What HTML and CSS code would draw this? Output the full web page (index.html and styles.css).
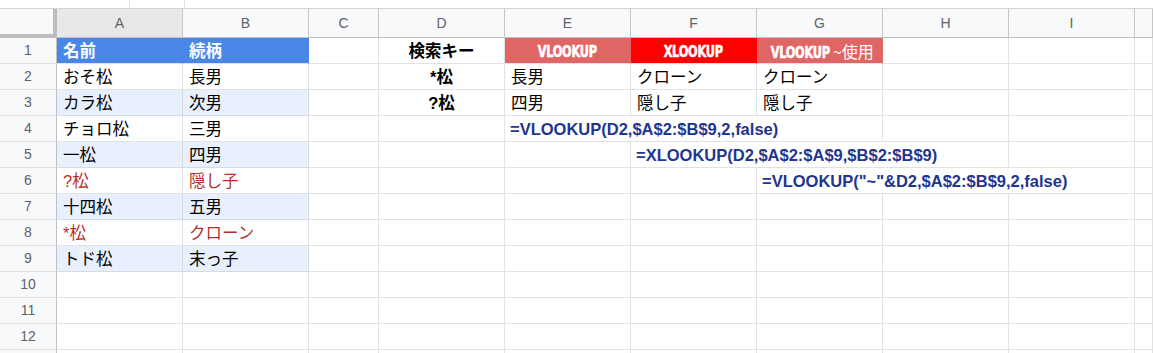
FILE: index.html
```html
<!DOCTYPE html>
<html lang="ja">
<head>
<meta charset="utf-8">
<title>Sheet</title>
<link rel="stylesheet" href="styles.css">
</head>
<body>
<div class="top">
  <span class="tb-gap"></span><span class="tb-line"></span><span class="tb-mid"></span><span class="tb-line"></span>
</div>
<div class="sheet">
  <div class="corner"></div>
  <div class="ch sel">A</div><div class="ch">B</div><div class="ch">C</div><div class="ch">D</div><div class="ch">E</div><div class="ch">F</div><div class="ch">G</div><div class="ch">H</div><div class="ch">I</div><div class="ch"></div>

  <div class="rh">1</div>
  <div class="c hd-blue">名前</div><div class="c hd-blue">続柄</div><div class="c"></div>
  <div class="c key">検索キー</div>
  <div class="c hd-lt"><span class="imp">VLOOKUP</span></div>
  <div class="c hd-red"><span class="imp">XLOOKUP</span></div>
  <div class="c hd-lt"><span class="imp">VLOOKUP</span><span class="jp-h">~使用</span></div>
  <div class="c"></div><div class="c"></div><div class="c"></div>

  <div class="rh">2</div>
  <div class="c">おそ松</div><div class="c">長男</div><div class="c"></div>
  <div class="c key">*松</div>
  <div class="c">長男</div><div class="c">クローン</div><div class="c">クローン</div>
  <div class="c"></div><div class="c"></div><div class="c"></div>

  <div class="rh">3</div>
  <div class="c band">カラ松</div><div class="c band">次男</div><div class="c"></div>
  <div class="c key">?松</div>
  <div class="c">四男</div><div class="c">隠し子</div><div class="c">隠し子</div>
  <div class="c"></div><div class="c"></div><div class="c"></div>

  <div class="rh">4</div>
  <div class="c">チョロ松</div><div class="c">三男</div><div class="c"></div><div class="c"></div>
  <div class="c fx span3">=VLOOKUP(D2,$A$2:$B$9,2,false)</div>
  <div class="c"></div><div class="c"></div><div class="c"></div>

  <div class="rh">5</div>
  <div class="c band">一松</div><div class="c band">四男</div><div class="c"></div><div class="c"></div><div class="c"></div>
  <div class="c fx span3">=XLOOKUP(D2,$A$2:$A$9,$B$2:$B$9)</div>
  <div class="c"></div><div class="c"></div>

  <div class="rh">6</div>
  <div class="c red">?松</div><div class="c red">隠し子</div><div class="c"></div><div class="c"></div><div class="c"></div><div class="c"></div>
  <div class="c fx span3">=VLOOKUP("~"&amp;D2,$A$2:$B$9,2,false)</div>
  <div class="c"></div>

  <div class="rh">7</div>
  <div class="c band">十四松</div><div class="c band">五男</div>
  <div class="c"></div><div class="c"></div><div class="c"></div><div class="c"></div><div class="c"></div><div class="c"></div><div class="c"></div><div class="c"></div>

  <div class="rh">8</div>
  <div class="c red">*松</div><div class="c red">クローン</div>
  <div class="c"></div><div class="c"></div><div class="c"></div><div class="c"></div><div class="c"></div><div class="c"></div><div class="c"></div><div class="c"></div>

  <div class="rh">9</div>
  <div class="c band">トド松</div><div class="c band">末っ子</div>
  <div class="c"></div><div class="c"></div><div class="c"></div><div class="c"></div><div class="c"></div><div class="c"></div><div class="c"></div><div class="c"></div>

  <div class="rh">10</div>
  <div class="c"></div><div class="c"></div><div class="c"></div><div class="c"></div><div class="c"></div><div class="c"></div><div class="c"></div><div class="c"></div><div class="c"></div><div class="c"></div>

  <div class="rh">11</div>
  <div class="c"></div><div class="c"></div><div class="c"></div><div class="c"></div><div class="c"></div><div class="c"></div><div class="c"></div><div class="c"></div><div class="c"></div><div class="c"></div>

  <div class="rh">12</div>
  <div class="c"></div><div class="c"></div><div class="c"></div><div class="c"></div><div class="c"></div><div class="c"></div><div class="c"></div><div class="c"></div><div class="c"></div><div class="c"></div>

  <div class="rh"></div>
  <div class="c"></div><div class="c"></div><div class="c"></div><div class="c"></div><div class="c"></div><div class="c"></div><div class="c"></div><div class="c"></div><div class="c"></div><div class="c"></div>
</div>
</body>
</html>
```

FILE: styles.css
```css
* { box-sizing: border-box; }
html, body {
  margin: 0;
  padding: 0;
  background: #ffffff;
  overflow: hidden;
}
body {
  width: 1153px;
  height: 353px;
  font-family: "Liberation Sans", "Noto Sans CJK JP", sans-serif;
  color: #000;
}

.top {
  height: 9px;
  display: flex;
  border-bottom: 1px solid #d4d4d4;
  overflow: hidden;
}
.tb-gap { width: 129px; }
.tb-line { width: 1px; background: #e0e0e0; }
.tb-mid { width: 54px; }

.sheet {
  display: grid;
  grid-template-columns: 57px 126px 126px 70px 126px 126px 126px 126px 126px 126px 1fr;
  grid-template-rows: 29px repeat(13, 26px);
  height: 344px;
  overflow: hidden;
}

.corner {
  background: #f8f9fa;
  border-right: 4px solid #bdbdbd;
  border-bottom: 4px solid #bdbdbd;
}
.ch {
  background: #f8f9fa;
  border-right: 1px solid #c7c7c7;
  border-bottom: 1px solid #c0c0c0;
  color: #5f6368;
  font-size: 14px;
  line-height: 28px;
  text-align: center;
  font-family: "Liberation Sans", sans-serif;
}
.ch.sel { background: #e8e8e8; }

.rh {
  background: #f8f9fa;
  border-right: 1px solid #c0c0c0;
  border-bottom: 1px solid #e0e0e0;
  color: #5f6368;
  font-size: 14px;
  line-height: 25px;
  text-align: center;
  font-family: "Liberation Sans", sans-serif;
}

.c {
  border-right: 1px solid #e2e2e2;
  border-bottom: 1px solid #e2e2e2;
  font-size: 16.5px;
  line-height: 23px;
  padding: 2px 0 0 6px;
  white-space: nowrap;
  overflow: hidden;
}

.band { background: #e8f0fe; border-right-color: #d6dbe3; border-bottom-color: #d6dbe3; }
.red { color: #b3302a; }

.hd-blue {
  background: #4a86e8;
  border-right-color: #4a86e8;
  color: #ffffff;
  font-weight: 700;
}
.key {
  font-weight: 700;
  text-align: center;
  padding-left: 0;
}
.hd-lt, .hd-red {
  color: #ffffff;
  text-align: center;
  padding-left: 0;
}
.hd-lt { background: #e06666; border-right-color: #e06666; }
.hd-red { background: #ff0000; border-right-color: #ff0000; }

.imp {
  display: inline-block;
  font-family: "DejaVu Sans Condensed", "DejaVu Sans", sans-serif;
  font-weight: 700;
  font-size: 15px;
  letter-spacing: -0.3px;
  -webkit-text-stroke: 0.5px #ffffff;
  transform: scaleX(0.84);
  transform-origin: center;
  vertical-align: baseline;
}
.jp-h {
  font-family: "Noto Sans CJK JP", sans-serif;
  font-size: 16px;
  margin-left: -3px;
}

.fx {
  color: #1f3591;
  font-weight: 700;
  padding-left: 5px;
}
.span3 { grid-column: span 3; }
```
